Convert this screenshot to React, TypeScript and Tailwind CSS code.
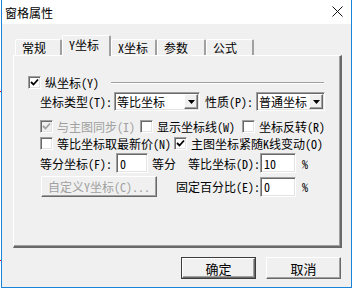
import React from 'react'

const sunken =
  'border border-t-[#a0a0a0] border-l-[#a0a0a0] border-r-white border-b-white shadow-[inset_1px_1px_0_#696969,inset_-1px_-1px_0_#e3e3e3]'
const raised =
  'border border-t-white border-l-white border-r-[#696969] border-b-[#696969] shadow-[inset_-1px_-1px_0_#a0a0a0]'

function Check({ checked, disabled }: { checked?: boolean; disabled?: boolean }) {
  return (
    <span
      className={`flex w-[13px] h-[13px] shrink-0 items-center justify-center ${sunken} ${
        disabled ? 'bg-[#f0f0f0]' : 'bg-white'
      }`}
    >
      {checked && (
        <svg width="9" height="9" viewBox="0 0 9 9">
          <polyline
            points="1,4 3.5,6.5 8,1.5"
            fill="none"
            stroke={disabled ? '#a0a0a0' : '#000'}
            strokeWidth="1.8"
          />
        </svg>
      )}
    </span>
  )
}

function CheckItem({
  label,
  checked,
  disabled,
  className = '',
}: {
  label: string
  checked?: boolean
  disabled?: boolean
  className?: string
}) {
  return (
    <div className={`flex items-center gap-[4px] shrink-0 ${className}`}>
      <Check checked={checked} disabled={disabled} />
      <span className={`whitespace-nowrap ${disabled ? 'text-[#a0a0a0]' : 'text-black'}`}>{label}</span>
    </div>
  )
}

function Combo({ value, className = '' }: { value: string; className?: string }) {
  return (
    <div className={`flex h-[19px] shrink-0 items-center bg-white ${sunken} ${className}`}>
      <span className="flex-1 pl-[2px] whitespace-nowrap">{value}</span>
      <span className={`flex h-[15px] w-[14px] mr-[1px] items-center justify-center bg-[#f0f0f0] ${raised}`}>
        <svg width="7" height="4" viewBox="0 0 7 4">
          <polygon points="0,0 7,0 3.5,4" fill="#000" />
        </svg>
      </span>
    </div>
  )
}

function Field({ value, className = '' }: { value: string; className?: string }) {
  return (
    <div className={`flex h-[20px] shrink-0 items-center bg-white pl-[3px] ${sunken} ${className}`}>
      {value}
    </div>
  )
}

const tabs = ['常规', 'Y坐标', 'X坐标', '参数', '公式']
const tabWidths = ['w-[47px]', 'w-[49px]', 'w-[46px]', 'w-[49px]', 'w-[48px]']

export default function App() {
  return (
    <div className="relative w-[354px] h-[289px] bg-white text-[12px] leading-[13px] text-black font-['Noto_Sans_Mono_CJK_SC','Noto_Sans_CJK_SC',sans-serif]">
      <div className="ml-[1px] flex h-[288px] w-[351px] flex-col border-x border-b border-[#1883d7]">
        {/* title bar */}
        <div className="flex h-[24px] shrink-0 items-center justify-between bg-white pl-[3px] pr-[8px]">
          <span className="text-[12px] font-['Noto_Sans_CJK_SC',sans-serif]">窗格属性</span>
          <svg width="11" height="11" viewBox="0 0 11 11" className="mb-[1px]">
            <path d="M0.5 0.5 L10.5 10.5 M10.5 0.5 L0.5 10.5" stroke="#111" strokeWidth="1" />
          </svg>
        </div>

        <div className="flex flex-1 flex-col bg-[#f0f0f0]">
          {/* tabs */}
          <div className="relative z-10 ml-[13px] mt-[11px] mb-[-1px] flex h-[21px] items-end">
            {tabs.map((t, i) => {
              const sel = i === 1
              return (
                <div
                  key={t}
                  className={`flex shrink-0 items-center pl-[6px] bg-[#f0f0f0] border-t border-l border-r-2 border-t-white border-l-white border-r-[#a0a0a0] rounded-t-[2px] whitespace-nowrap ${
                    tabWidths[i]
                  } ${sel ? 'h-[21px] pb-[3px]' : 'h-[16px] mb-[1px]'}`}
                >
                  {t}
                </div>
              )
            })}
          </div>

          {/* panel */}
          <div className="ml-[11px] h-[193px] w-[329px] border-t border-l border-r-2 border-b-2 border-t-white border-l-white border-r-[#696969] border-b-[#696969] shadow-[inset_-1px_-1px_0_#a0a0a0]">
            {/* row 1 */}
            <div className="mt-[20px] flex h-[13px] items-center pl-[14px]">
              <CheckItem label="纵坐标(Y)" checked />
              <div className="ml-[12px] h-[2px] w-[213px] border-t border-b border-t-[#a0a0a0] border-b-white" />
            </div>

            {/* row 2 */}
            <div className="mt-[3px] flex h-[19px] items-center pl-[26px]">
              <span className="w-[74px] shrink-0 whitespace-nowrap">坐标类型(T):</span>
              <Combo value="等比坐标" className="w-[86px]" />
              <span className="ml-[5px] w-[51px] shrink-0 whitespace-nowrap">性质(P):</span>
              <Combo value="普通坐标" className="w-[69px]" />
            </div>

            {/* row 3 */}
            <div className="mt-[9px] flex h-[13px] items-center pl-[26px]">
              <CheckItem label="与主图同步(I)" checked disabled className="w-[100px]" />
              <CheckItem label="显示坐标线(W)" className="w-[102px]" />
              <CheckItem label="坐标反转(R)" />
            </div>

            {/* row 4 */}
            <div className="mt-[4px] flex h-[13px] items-center pl-[26px]">
              <CheckItem label="等比坐标取最新价(N)" className="w-[134px]" />
              <CheckItem label="主图坐标紧随K线变动(O)" checked />
            </div>

            {/* row 5 */}
            <div className="mt-[3px] flex h-[20px] items-center pl-[26px]">
              <span className="w-[76px] shrink-0 whitespace-nowrap">等分坐标(F):</span>
              <Field value="0" className="w-[32px]" />
              <span className="ml-[4px] w-[24px] shrink-0">等分</span>
              <span className="w-[84px] shrink-0 text-right whitespace-nowrap">等比坐标(D):</span>
              <Field value="10" className="w-[36px]" />
              <span className="ml-[6px]">%</span>
            </div>

            {/* row 6 */}
            <div className="mt-[3px] flex h-[21px] items-center pl-[27px]">
              <div
                className={`flex h-[21px] w-[116px] shrink-0 items-center justify-center bg-[#f0f0f0] text-[#a0a0a0] whitespace-nowrap ${raised}`}
              >
                自定义Y坐标(C)...
              </div>
              <span className="ml-[19px] w-[84px] shrink-0 text-right whitespace-nowrap">固定百分比(E):</span>
              <Field value="0" className="w-[36px]" />
              <span className="ml-[6px]">%</span>
            </div>
          </div>

          {/* buttons */}
          <div className="mt-[9px] mr-[10px] flex justify-end gap-[10px]">
            <div className="h-[22px] w-[75px] border border-[#3c3c3c]">
              <div className={`flex h-full w-full items-center justify-center bg-[#f0f0f0] text-[13px] ${raised}`}>
                确定
              </div>
            </div>
            <div
              className={`flex h-[22px] w-[75px] items-center justify-center bg-[#f0f0f0] text-[13px] ${raised}`}
            >
              取消
            </div>
          </div>
        </div>
      </div>

      {/* stray red marks at the left edge */}
      <div className="absolute left-0 top-[91px] h-[1px] w-[1px] bg-[#e00000]" />
      <div className="absolute left-0 top-[260px] h-[1px] w-[1px] bg-[#e00000]" />
    </div>
  )
}
